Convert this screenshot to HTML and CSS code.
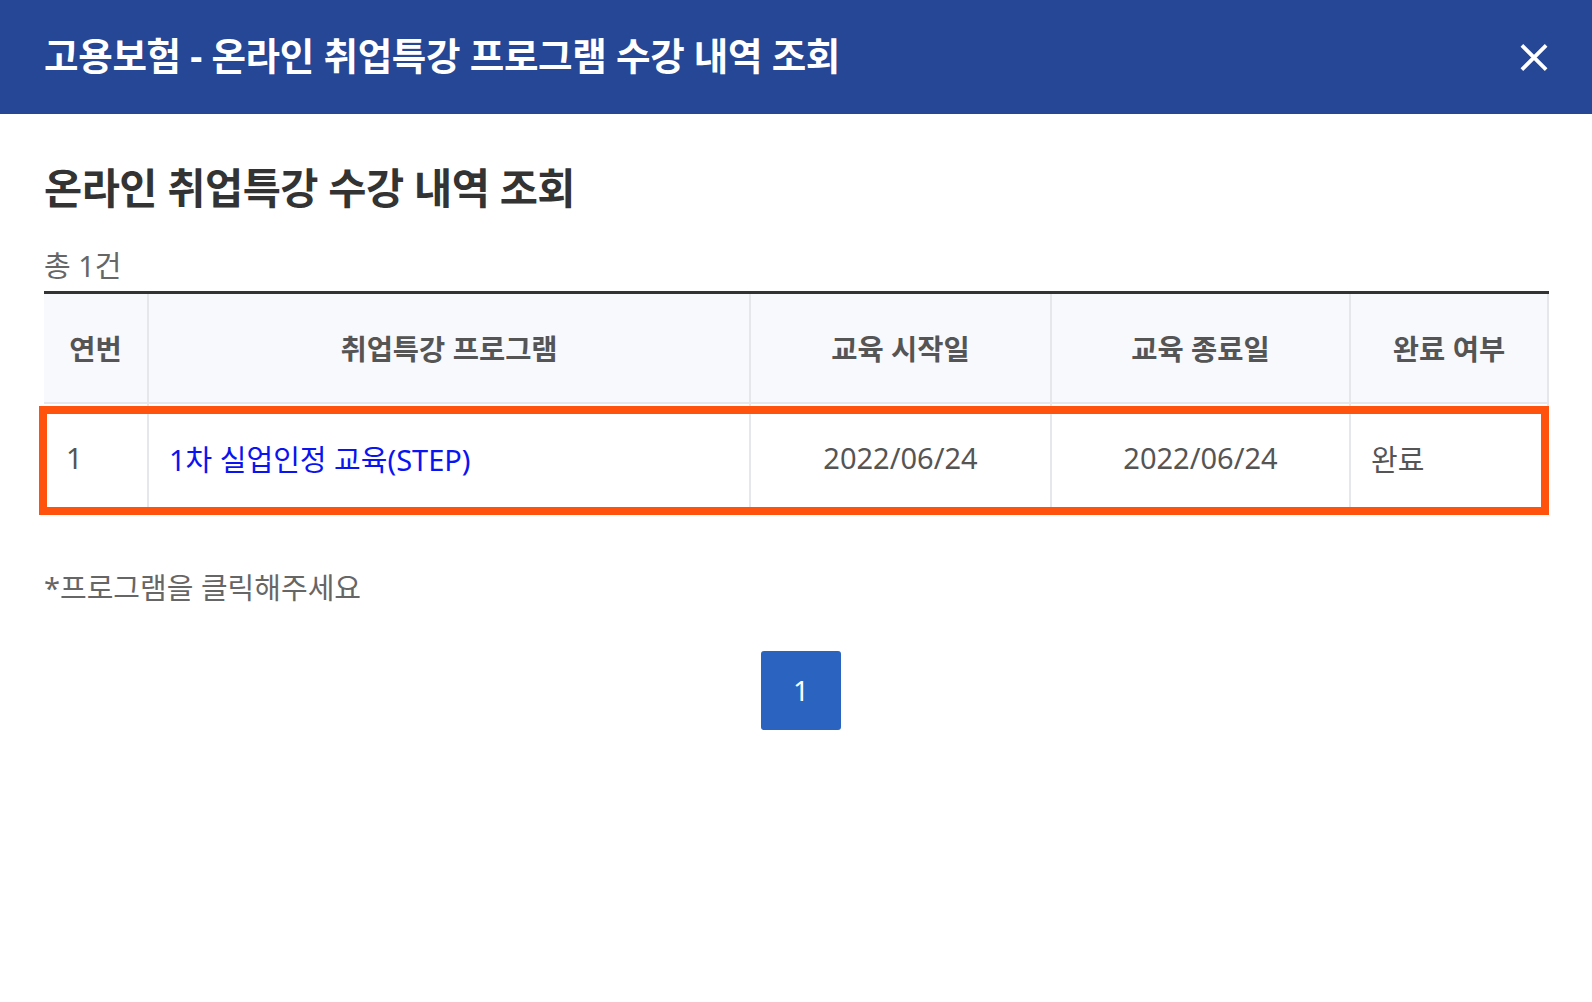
FILE: index.html
```html
<!DOCTYPE html>
<html lang="ko">
<head>
<meta charset="utf-8">
<title>온라인 취업특강 수강 내역 조회</title>
<link rel="stylesheet" href="styles.css">
</head>
<body>
<div class="popup">
  <header class="popup-head">
    <h1 class="popup-title">고용보험 - 온라인 취업특강 프로그램 수강 내역 조회</h1>
    <button class="close-btn" aria-label="닫기">
      <svg width="30" height="30" viewBox="0 0 30 30"><path d="M2 2 L28 28 M28 2 L2 28" stroke="#fff" stroke-width="4" stroke-linecap="butt"/></svg>
    </button>
  </header>
  <main class="popup-body">
    <h2 class="section-title">온라인 취업특강 수강 내역 조회</h2>
    <p class="total">총 1건</p>
    <div class="table-wrap">
      <table class="list">
        <colgroup>
          <col class="c1"><col class="c2"><col class="c3"><col class="c4"><col class="c5">
        </colgroup>
        <thead>
          <tr><th>연번</th><th>취업특강 프로그램</th><th>교육 시작일</th><th>교육 종료일</th><th>완료 여부</th></tr>
        </thead>
        <tbody>
          <tr><td class="left">1</td><td class="left"><a class="prog" href="#">1차 실업인정 교육(STEP)</a></td><td>2022/06/24</td><td>2022/06/24</td><td class="left">완료</td></tr>
        </tbody>
      </table>
      <div class="highlight"></div>
    </div>
    <p class="note">*프로그램을 클릭해주세요</p>
    <nav class="paging"><a class="page on" href="#">1</a></nav>
  </main>
</div>
</body>
</html>
```
FILE: styles.css
```css
* { box-sizing: border-box; }
html, body { margin: 0; padding: 0; background: #fff; }
body { font-family: "Noto Sans", "Noto Sans CJK KR", sans-serif; color: #333; }
.popup-head {
  height: 114px;
  background: #264696;
  display: flex;
  align-items: center;
  justify-content: space-between;
  padding: 0 44px;
}
.popup-title {
  margin: 0 0 8px;
  color: #fff;
  font-size: 37.5px;
  font-weight: 700;
  letter-spacing: -0.3px;
}
.close-btn {
  border: 0; background: none; padding: 0; margin: 0;
  width: 28px; height: 30px;
  display: flex; align-items: center; justify-content: center;
}
.close-btn svg { width: 28px; height: 29px; }
.popup-body { padding: 0 44px; }
.section-title {
  margin: 0;
  padding-top: 46px;
  font-size: 41.5px;
  font-weight: 700;
  color: #333;
  line-height: 56px;
  letter-spacing: -0.5px;
}
.total {
  margin: 30px 0 0;
  font-size: 29px;
  color: #666;
  line-height: 40px;
  height: 45px;
}
.table-wrap { position: relative; }
.list {
  width: 100%;
  border-collapse: collapse;
  table-layout: fixed;
  border-top: 3px solid #333;
}
.c1 { width: 104px; }
.c2 { width: 602px; }
.c3 { width: 301px; }
.c4 { width: 299px; }
.c5 { width: 198px; }
.list th, .list td {
  border: 2px solid #e6e7ea;
  border-top: 0;
  font-size: 29px;
  height: 110px;
  text-align: center;
  padding: 0 20px;
  color: #555;
}
.list th:first-child, .list td:first-child { border-left: 0; }
.list th {
  background: #f8f9fd;
  font-weight: 700;
  font-size: 28.5px;
  color: #555;
}
.list td { font-weight: 400; }
.list td.left { text-align: left; }
.list td:first-child { padding-left: 22px; }
.prog { color: #0a14f0; text-decoration: none; }
.highlight {
  position: absolute;
  left: -5px; right: -1px;
  top: 115px; height: 109px;
  border: 8px solid #ff530d;
  pointer-events: none;
}
.note {
  margin: 54px 0 0;
  font-size: 29px;
  color: #666;
  line-height: 40px;
}
.paging {
  display: flex;
  justify-content: center;
  margin-top: 43px;
  padding-left: 10px;
}
.page {
  display: flex; align-items: center; justify-content: center;
  width: 80px; height: 79px;
  background: #2b64c0;
  color: #fff;
  font-size: 28px;
  text-decoration: none;
  border-radius: 3px;
}
```
